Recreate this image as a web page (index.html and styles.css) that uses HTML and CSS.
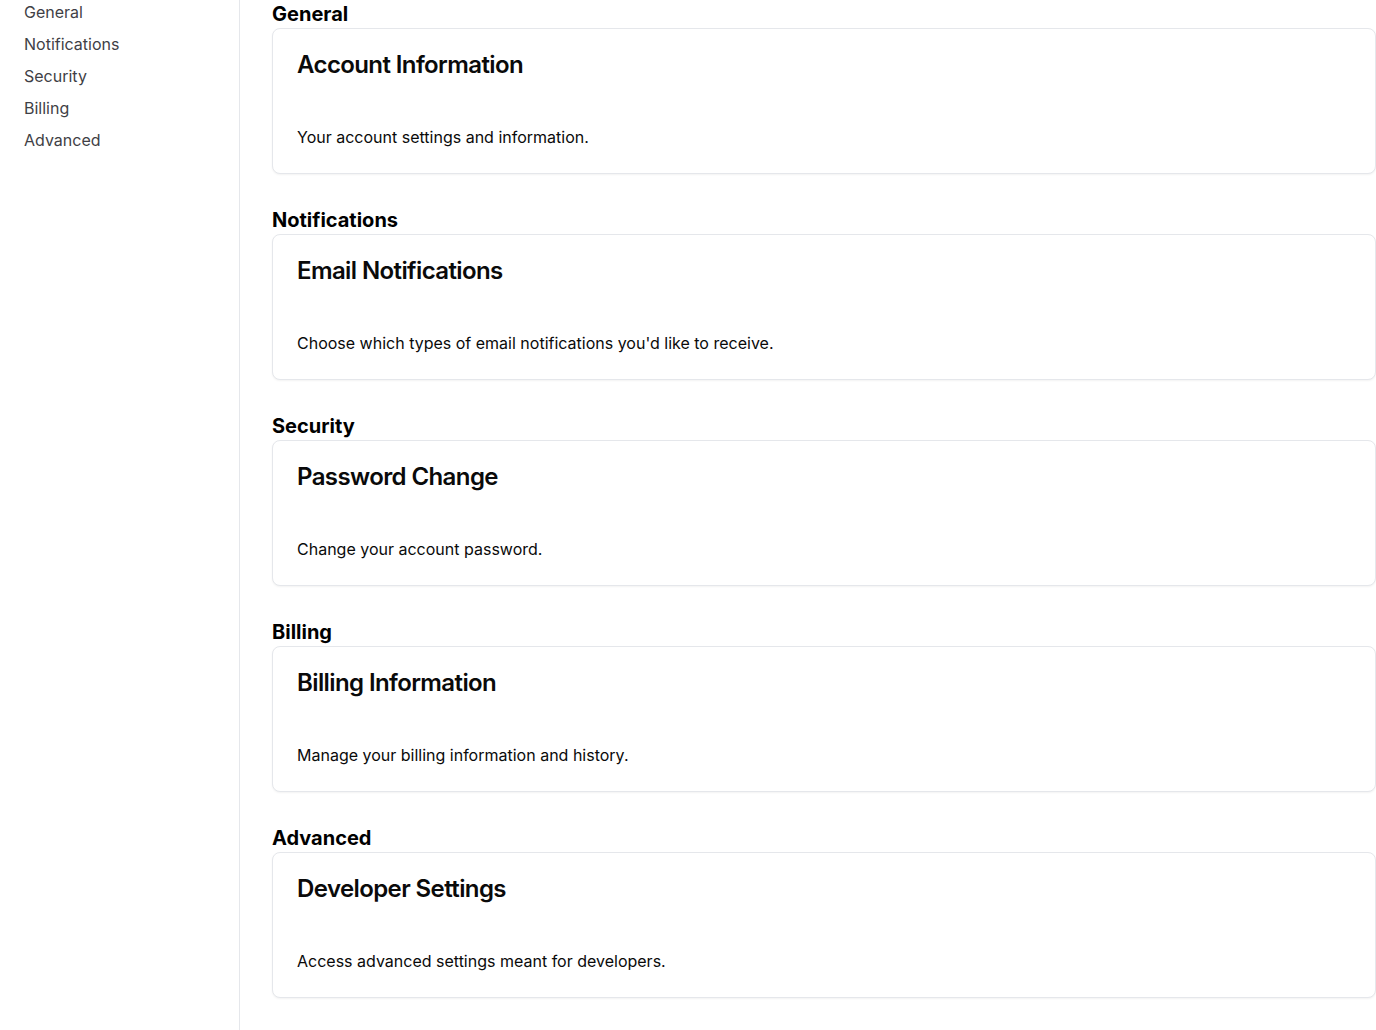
FILE: index.html
```html
<!DOCTYPE html>
<html lang="en">
<head>
<meta charset="utf-8">
<title>Settings</title>
<link rel="stylesheet" href="styles.css">
</head>
<body>
<div class="layout">
  <aside class="sidebar">
    <nav class="nav">
      <a class="nav-link" href="#general">General</a>
      <a class="nav-link" href="#notifications">Notifications</a>
      <a class="nav-link" href="#security">Security</a>
      <a class="nav-link" href="#billing">Billing</a>
      <a class="nav-link" href="#advanced">Advanced</a>
    </nav>
  </aside>
  <main class="main">
    <section class="section" id="general">
      <h2 class="section-title">General</h2>
      <div class="card">
        <div class="card-header"><h3 class="card-title">Account Information</h3></div>
        <div class="card-content"><p class="card-text">Your account settings and information.</p></div>
      </div>
    </section>
    <section class="section" id="notifications">
      <h2 class="section-title">Notifications</h2>
      <div class="card">
        <div class="card-header"><h3 class="card-title">Email Notifications</h3></div>
        <div class="card-content"><p class="card-text">Choose which types of email notifications you'd like to receive.</p></div>
      </div>
    </section>
    <section class="section" id="security">
      <h2 class="section-title">Security</h2>
      <div class="card">
        <div class="card-header"><h3 class="card-title">Password Change</h3></div>
        <div class="card-content"><p class="card-text">Change your account password.</p></div>
      </div>
    </section>
    <section class="section" id="billing">
      <h2 class="section-title">Billing</h2>
      <div class="card">
        <div class="card-header"><h3 class="card-title">Billing Information</h3></div>
        <div class="card-content"><p class="card-text">Manage your billing information and history.</p></div>
      </div>
    </section>
    <section class="section" id="advanced">
      <h2 class="section-title">Advanced</h2>
      <div class="card">
        <div class="card-header"><h3 class="card-title">Developer Settings</h3></div>
        <div class="card-content"><p class="card-text">Access advanced settings meant for developers.</p></div>
      </div>
    </section>
  </main>
</div>
</body>
</html>
```

FILE: styles.css
```css
* { box-sizing: border-box; }
html, body { margin: 0; padding: 0; background: #ffffff; }
body {
  font-family: Inter, "Noto Sans", "Liberation Sans", sans-serif;
  color: #0a0a0a;
  overflow: hidden;
}
.layout {
  display: flex;
  min-height: 1030px;
}
.sidebar {
  width: 240px;
  flex-shrink: 0;
  border-right: 1px solid #e5e7eb;
  padding: 0 24px;
}
.nav {
  display: flex;
  flex-direction: column;
  gap: 8px;
}
.nav-link {
  font-size: 16px;
  line-height: 24px;
  color: #3f3f46;
  text-decoration: none;
}
.main {
  flex: 1;
  padding: 0 0 0 32px;
  display: flex;
  flex-direction: column;
  gap: 32px;
}
.section-title {
  margin: 0;
  font-size: 20px;
  line-height: 28px;
  font-weight: 700;
  color: #000;
}
.card {
  border: 1px solid #e5e7eb;
  border-radius: 8px;
  background: #fff;
  box-shadow: 0 1px 2px rgba(0, 0, 0, 0.05);
}
.card-header {
  padding: 24px;
}
.card-title {
  margin: 0;
  font-size: 24px;
  line-height: 24px;
  font-weight: 600;
  letter-spacing: -0.025em;
}
.card-content {
  padding: 24px;
}
.card-text {
  margin: 0;
  font-size: 16px;
  line-height: 24px;
}
```
